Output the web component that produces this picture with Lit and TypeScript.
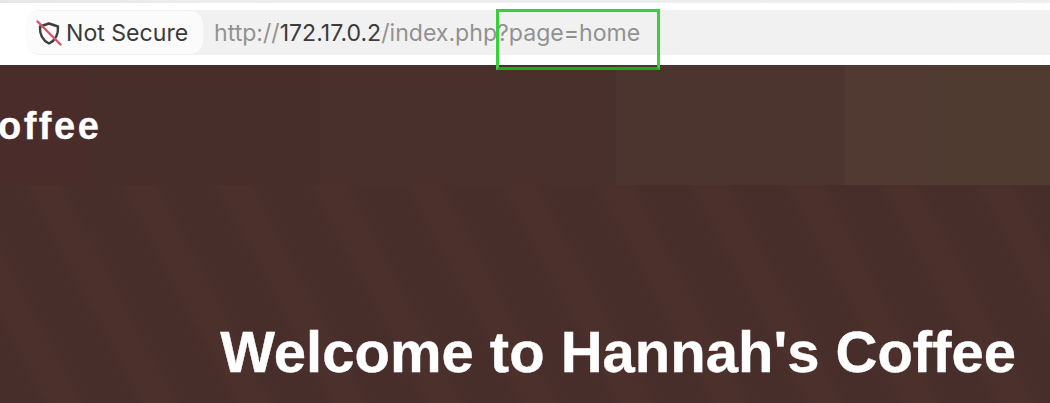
import { LitElement, html, css } from "lit";
import { customElement } from "lit/decorators.js";

@customElement("app-root")
export class AppRoot extends LitElement {
  static styles = css`
    :host { display: block; width: 1050px; height: 403px; overflow: hidden; position: relative; background: #fff; font-family: Inter, "Liberation Sans", sans-serif; }
    .strip { height: 3px; background: linear-gradient(90deg, #e6e6e6, #ededed 20%, #eeeeee); }
    .chrome { height: 62px; box-sizing: border-box; padding: 7px 0 10px 26px; background: #fff; }
    .bar { height: 45px; display: flex; align-items: center; background: #f1f1f1; border-radius: 14px 0 0 14px; }
    .pill { width: 177px; height: 43px; box-sizing: border-box; display: flex; align-items: center; gap: 4px; padding-left: 10px; background: #fbfbfb; border-radius: 13px; color: #3a3a3a; font-size: 23.1px; flex: none; }
    .pill svg { flex: none; }
    .url { margin-left: 11px; font-size: 23.1px; color: #919191; white-space: nowrap; }
    .url b { font-weight: 400; color: #3c3c3c; }
    .page { height: 338px; display: flex; flex-direction: column; color: #fff; font-family: "Liberation Sans", Arial, sans-serif; font-weight: 700; }
    .head { height: 120px; flex: none; display: flex; align-items: center; overflow: hidden;
      background: linear-gradient(90deg, #4a2c2a 0 88px, #472e2a 88px 320px, #4a302c 320px 616px, #4c352e 616px 845px, #503a32 845px 940px, #503b30 940px); }
    .logo { font-size: 38px; letter-spacing: 2.5px; margin-left: -2px; margin-top: 2px; -webkit-text-stroke: 0.3px #fff; }
    .hero { flex: 1; display: flex; justify-content: flex-end; align-items: flex-start; padding: 138px 34px 0 0;
      background: repeating-linear-gradient(62deg, #472e2a 0 30px, #4b302c 46px 68px, #472e2a 84px); }
    h1 { margin: 0; font-size: 58px; line-height: 1; white-space: nowrap; -webkit-text-stroke: 0.4px #fff; }
    .mark { position: absolute; left: 496px; top: 9px; width: 164px; height: 61px; box-sizing: border-box; border: 3px solid #3ad03a; border-bottom-color: #17b017; }
  `;

  render() {
    return html`
      <div class="strip"></div>
      <div class="chrome">
        <div class="bar">
          <div class="pill">
            <svg width="26" height="26" viewBox="0 0 26 26" fill="none">
              <path d="M13 3.5 L22 6.5 C22.5 14 20 20 13 23.5 C6 20 3.5 14 4 6.5 Z" stroke="#3f3f3f" stroke-width="2.4" stroke-linejoin="round"/>
              <path d="M1.5 1.5 L24.5 24.5" stroke="#d8546e" stroke-width="2.4" stroke-linecap="round"/>
            </svg>
            <span>Not Secure</span>
          </div>
          <span class="url">http://<b>172.17.0.2</b>/index.php?page=home</span>
        </div>
      </div>
      <div class="page">
        <div class="head"><span class="logo">offee</span></div>
        <div class="hero"><h1>Welcome to Hannah's Coffee</h1></div>
      </div>
      <div class="mark"></div>
    `;
  }
}
